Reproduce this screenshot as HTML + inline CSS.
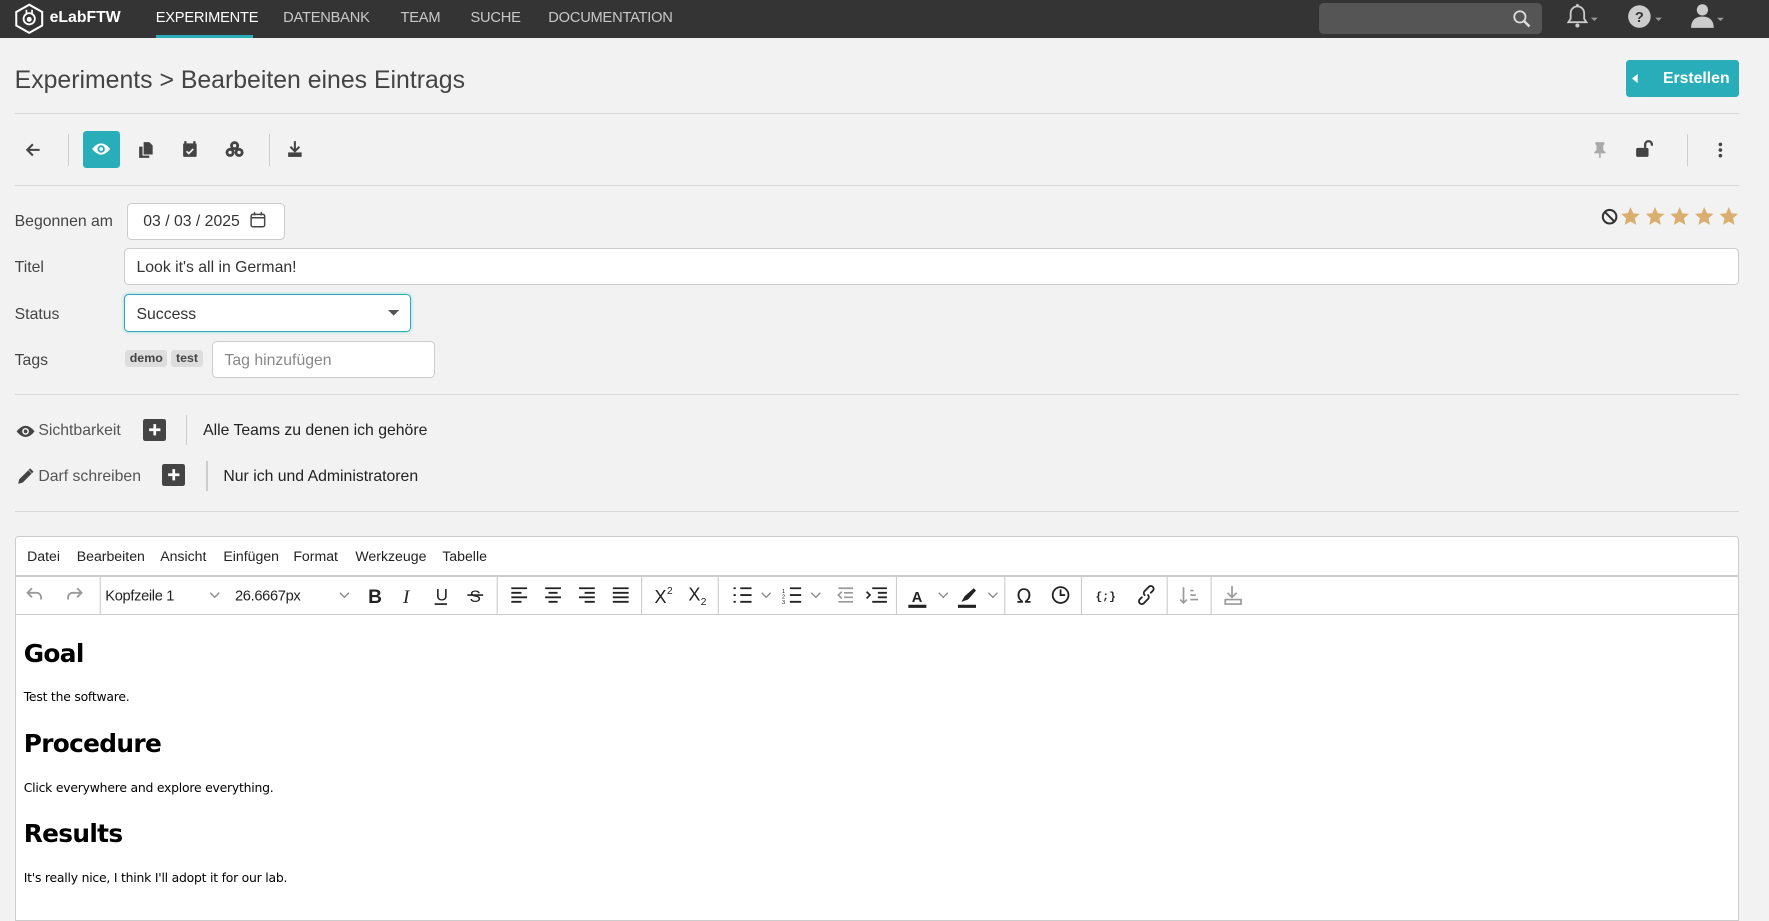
<!DOCTYPE html>
<html><head><meta charset="utf-8"><style>
html,body{margin:0;padding:0;width:1769px;height:897px;overflow:hidden;background:#f2f2f2;font-family:"Liberation Sans",sans-serif}
#w{position:absolute;left:0;top:0;width:1568px;height:795px;zoom:1.12819;color:#333}
.a{position:absolute}
.nav{left:0;top:0;width:1568px;height:34px;background:#343434}
.ni{top:9px;font-size:13px;color:#c8c8c8;letter-spacing:-0.2px}
.hr{height:1px;background:#d8d8d8;left:13px;width:1528px}
.lbl{font-size:14px;color:#444}
.inp{background:#fff;border:1px solid #ccc;border-radius:4px;box-sizing:border-box}
.tag{top:310px;height:15px;background:#ddd;border-radius:3px;font-size:11px;font-weight:bold;color:#444;line-height:15px;padding:0 4px}
.sep{width:1px;background:#ccc}
.mi{top:486px;font-size:12.5px;color:#222}
.h{font-size:22px;font-weight:bold;color:#000;left:21px;font-family:"DejaVu Sans","Liberation Sans",sans-serif;letter-spacing:-0.6px}
.p{font-size:11px;color:#000;left:21px;font-family:"DejaVu Sans","Liberation Sans",sans-serif;letter-spacing:-0.2px}
</style></head><body><div id="w">
<div class="a nav"></div>
<svg class="a" style="left:12px;top:3px" width="27" height="28" viewBox="0 0 27 28"><path d="M13.5 1.5L25 8v12l-11.5 6.5L2 20V8z" fill="none" stroke="#fff" stroke-width="1.8"/><circle cx="13.5" cy="14" r="5" fill="none" stroke="#fff" stroke-width="1.6"/><circle cx="13.5" cy="14.5" r="2.2" fill="#fff"/><path d="M11 6v4M16 6v4" stroke="#fff" stroke-width="1.5"/></svg>
<div class="a" style="left:44px;top:8px;font-size:14px;font-weight:bold;color:#fff">eLabFTW</div>
<div class="a ni" style="left:138px;color:#fff">EXPERIMENTE</div>
<div class="a" style="left:138px;top:31px;width:86px;height:3px;background:#29aeb9"></div>
<div class="a ni" style="left:251px">DATENBANK</div>
<div class="a ni" style="left:355px">TEAM</div>
<div class="a ni" style="left:417px">SUCHE</div>
<div class="a ni" style="left:486px">DOCUMENTATION</div>
<div class="a" style="left:1169px;top:3px;width:198px;height:27px;background:#555;border-radius:4px"></div>
<svg class="a" style="left:1340px;top:8px" width="18" height="18" viewBox="0 0 18 18"><circle cx="7" cy="7" r="5" fill="none" stroke="#ddd" stroke-width="1.6"/><path d="M10.5 10.5l5 5" stroke="#ddd" stroke-width="2.2"/></svg>
<svg class="a" style="left:1387px;top:3px" width="30" height="24" viewBox="0 0 30 24"><path d="M3 17h16l-2-3V9a6 6 0 0 0-12 0v5z" fill="none" stroke="#ccc" stroke-width="1.6"/><circle cx="11" cy="20" r="1.8" fill="#ccc"/><circle cx="11" cy="2" r="1.2" fill="#ccc"/><path d="M23 13h6l-3 3z" fill="#999"/></svg>
<svg class="a" style="left:1442px;top:3px" width="34" height="24" viewBox="0 0 34 24"><circle cx="11" cy="12" r="10" fill="#ccc"/><text x="11" y="17" font-size="13" font-weight="bold" text-anchor="middle" fill="#343434" font-family="Liberation Sans">?</text><path d="M25 13h6l-3 3z" fill="#999"/></svg>
<svg class="a" style="left:1498px;top:2px" width="34" height="24" viewBox="0 0 34 24"><circle cx="11" cy="7" r="5" fill="#ccc"/><path d="M1 23c0-7 4-10 10-10s10 3 10 10z" fill="#ccc"/><path d="M24 14h6l-3 3z" fill="#999"/></svg>

<div class="a" style="left:13px;top:59px;font-size:22px;color:#444">Experiments &gt; Bearbeiten eines Eintrags</div>
<div class="a" style="left:1441px;top:53px;width:100px;height:33px;background:#29aeb9;border-radius:3px"></div>
<svg class="a" style="left:1447px;top:66px" width="6" height="8"><path d="M5 0v8L0 4z" fill="#fff"/></svg>
<div class="a" style="left:1474px;top:62px;font-size:14px;font-weight:bold;color:#fff">Erstellen</div>
<div class="a hr" style="top:100px"></div>

<svg class="a" style="left:22px;top:126px" width="14" height="14" viewBox="0 0 14 14"><path d="M13 7H2M7 2L2 7l5 5" fill="none" stroke="#444" stroke-width="1.8"/></svg>
<div class="a sep" style="left:60px;top:119px;height:28px"></div>
<div class="a" style="left:74px;top:116px;width:32px;height:33px;background:#29aeb9;border-radius:3px"></div>
<svg class="a" style="left:81px;top:124px" width="18" height="16" viewBox="0 0 18 16"><path d="M1 8q8-10 16 0q-8 10-16 0z" fill="#fff"/><circle cx="9" cy="8" r="3.3" fill="#29aeb9"/><circle cx="9" cy="8" r="1.6" fill="#fff"/></svg>
<svg class="a" style="left:122px;top:125px" width="15" height="16" viewBox="0 0 15 16"><path d="M5 1h5l3 3v8H5z" fill="#444"/><path d="M1 5h3v8h6v2H1z" fill="#444"/></svg>
<svg class="a" style="left:161px;top:124px" width="14" height="16" viewBox="0 0 14 16"><rect x="1" y="3" width="12" height="12" rx="1" fill="#444"/><path d="M3 1v3M11 1v3" stroke="#444" stroke-width="2"/><path d="M4 10l2 2 4-4" fill="none" stroke="#f2f2f2" stroke-width="1.5"/></svg>
<svg class="a" style="left:199px;top:124px" width="17" height="16" viewBox="0 0 17 16"><circle cx="8.5" cy="5" r="4" fill="#444"/><circle cx="4.5" cy="11" r="4" fill="#444"/><circle cx="12.5" cy="11" r="4" fill="#444"/><circle cx="8.5" cy="5" r="1.5" fill="#f2f2f2"/><circle cx="4.5" cy="11" r="1.5" fill="#f2f2f2"/><circle cx="12.5" cy="11" r="1.5" fill="#f2f2f2"/></svg>
<div class="a sep" style="left:238px;top:119px;height:28px"></div>
<svg class="a" style="left:254px;top:124px" width="14" height="16" viewBox="0 0 14 16"><path d="M7 1v9M3 6l4 4 4-4" fill="none" stroke="#444" stroke-width="1.8"/><rect x="1" y="11" width="12" height="4" fill="#444"/></svg>
<svg class="a" style="left:1411px;top:125px" width="14" height="16" viewBox="0 0 14 16"><path d="M3 1h8v2l-1 1v4l2 2v1H2v-1l2-2V4L3 3z" fill="#aaa"/><path d="M7 11v4" stroke="#aaa" stroke-width="1.5"/></svg>
<svg class="a" style="left:1449px;top:124px" width="18" height="16" viewBox="0 0 18 16"><rect x="1" y="7" width="11" height="8" rx="1.5" fill="#444"/><path d="M9 7V4a3 3 0 0 1 6 0v1" fill="none" stroke="#444" stroke-width="2"/></svg>
<div class="a sep" style="left:1495px;top:119px;height:28px"></div>
<svg class="a" style="left:1522px;top:125px" width="6" height="16"><circle cx="3" cy="3" r="1.6" fill="#444"/><circle cx="3" cy="8" r="1.6" fill="#444"/><circle cx="3" cy="13" r="1.6" fill="#444"/></svg>
<div class="a hr" style="top:164px"></div>

<div class="a lbl" style="left:13px;top:189px">Begonnen am</div>
<div class="a inp" style="left:113px;top:180px;width:140px;height:33px"></div>
<div class="a" style="left:127px;top:189px;font-size:14px;color:#333">03 / 03 / 2025</div>
<svg class="a" style="left:222px;top:187px" width="14" height="15" viewBox="0 0 14 15"><rect x="1" y="3" width="12" height="11" rx="1.5" fill="none" stroke="#444" stroke-width="1.3"/><path d="M1 6h12M4 1v3M10 1v3" stroke="#444" stroke-width="1.3"/></svg>
<svg class="a" style="left:1418px;top:183px" width="124" height="18" viewBox="0 0 124 18"><circle cx="8.5" cy="9.5" r="6" fill="none" stroke="#333" stroke-width="1.8"/><path d="M4.5 5.5l8 8" stroke="#333" stroke-width="1.8"/><g fill="#d9ae6e"><path id="s" d="M27 1l2.4 5.4 5.8.6-4.4 3.9 1.3 5.8L27 13.7l-5.1 3 1.3-5.8L18.8 7l5.8-.6z"/><use href="#s" x="21.8"/><use href="#s" x="43.6"/><use href="#s" x="65.4"/><use href="#s" x="87.2"/></g></svg>

<div class="a lbl" style="left:13px;top:230px">Titel</div>
<div class="a inp" style="left:110px;top:220px;width:1431px;height:33px"></div>
<div class="a" style="left:121px;top:230px;font-size:14px;color:#333">Look it's all in German!</div>

<div class="a lbl" style="left:13px;top:271px">Status</div>
<div class="a inp" style="left:110px;top:261px;width:254px;height:33px;border-color:#29aeb9;box-shadow:0 0 3px #8cd3d9"></div>
<div class="a" style="left:121px;top:271px;font-size:14px;color:#333">Success</div>
<svg class="a" style="left:344px;top:275px" width="10" height="6"><path d="M0 0h10L5 5z" fill="#555"/></svg>

<div class="a lbl" style="left:13px;top:312px">Tags</div>
<div class="a tag" style="left:111px">demo</div>
<div class="a tag" style="left:152px">test</div>
<div class="a inp" style="left:188px;top:302px;width:198px;height:33px"></div>
<div class="a" style="left:199px;top:312px;font-size:14px;color:#888">Tag hinzufügen</div>
<div class="a hr" style="top:349px"></div>

<svg class="a" style="left:14px;top:376px" width="17" height="13" viewBox="0 0 17 13"><path d="M0.5 6.5q8-10 16 0q-8 10-16 0z" fill="#444"/><circle cx="8.5" cy="6.5" r="3" fill="#f2f2f2"/><circle cx="8.5" cy="6.5" r="1.6" fill="#444"/></svg>
<div class="a lbl" style="left:34px;top:374px;color:#555">Sichtbarkeit</div>
<div class="a" style="left:127px;top:371px;width:20px;height:20px;background:#444;border-radius:2px"></div>
<svg class="a" style="left:131px;top:375px" width="12" height="12"><path d="M6 1v10M1 6h10" stroke="#fff" stroke-width="2.4"/></svg>
<div class="a sep" style="left:165px;top:368px;height:26px"></div>
<div class="a" style="left:180px;top:374px;font-size:14px;color:#222">Alle Teams zu denen ich gehöre</div>

<svg class="a" style="left:15px;top:415px" width="15" height="15" viewBox="0 0 15 15"><path d="M1 14l1-4 8-8 3 3-8 8z" fill="#444"/><path d="M11 1l3 3" stroke="#444" stroke-width="2"/></svg>
<div class="a lbl" style="left:34px;top:415px;color:#555">Darf schreiben</div>
<div class="a" style="left:144px;top:411px;width:20px;height:20px;background:#444;border-radius:2px"></div>
<svg class="a" style="left:148px;top:415px" width="12" height="12"><path d="M6 1v10M1 6h10" stroke="#fff" stroke-width="2.4"/></svg>
<div class="a sep" style="left:183px;top:409px;height:26px"></div>
<div class="a" style="left:198px;top:415px;font-size:14px;color:#222">Nur ich und Administratoren</div>
<div class="a hr" style="top:453px"></div>

<div class="a" style="left:13px;top:475px;width:1527px;height:340px;background:#fff;border:1px solid #ccc;border-radius:3px 3px 0 0"></div>
<div class="a" style="left:14px;top:510px;width:1527px;height:1px;background:#ccc"></div>
<div class="a" style="left:14px;top:544px;width:1527px;height:1px;background:#ccc"></div>
<div class="a mi" style="left:24px">Datei</div>
<div class="a mi" style="left:68px">Bearbeiten</div>
<div class="a mi" style="left:142px">Ansicht</div>
<div class="a mi" style="left:198px">Einfügen</div>
<div class="a mi" style="left:260px">Format</div>
<div class="a mi" style="left:315px">Werkzeuge</div>
<div class="a mi" style="left:392px">Tabelle</div>

<svg class="a" style="left:14px;top:511px" width="1200" height="33" viewBox="0 0 1200 33">
<g fill="none" stroke-width="1.6">
<path d="M14 10l-4 4 4 4M10 14h8a4 4 0 0 1 4 4v2" stroke="#999"/>
<path d="M54 10l4 4-4 4M58 14h-8a4 4 0 0 0-4 4v2" stroke="#999"/>
</g>
<g stroke="#ccc"><path d="M74.5 0v33M426.5 0v33M554.5 0v33M622.5 0v33M780.5 0v33M876.5 0v33M944.5 0v33M1020.5 0v33M1059.5 0v33"/></g>
<text x="79" y="21" font-size="13" fill="#222" font-family="Liberation Sans" letter-spacing="-0.3">Kopfzeile 1</text>
<path d="M172 14l4 4 4-4M287 14l4 4 4-4M661 14l4 4 4-4M705 14l4 4 4-4M818 14l4 4 4-4M862 14l4 4 4-4" fill="none" stroke="#888" stroke-width="1.2"/>
<text x="194" y="21" font-size="13" fill="#222" font-family="Liberation Sans" letter-spacing="-0.3">26.6667px</text>
<text x="312" y="23" font-size="17" font-weight="bold" fill="#222" font-family="Liberation Sans">B</text>
<text x="343" y="23" font-size="17" font-style="italic" fill="#222" font-family="Liberation Serif">I</text>
<text x="372" y="21" font-size="15" fill="#222" font-family="Liberation Sans">U</text><path d="M371 24h11" stroke="#222" stroke-width="1.5"/>
<text x="402" y="22" font-size="15" fill="#222" font-family="Liberation Sans">S</text><path d="M400 16h14" stroke="#222" stroke-width="1.5"/>
<g stroke="#222" stroke-width="1.6">
<path d="M439 10h14M439 14h9M439 18h14M439 22h9"/>
<path d="M469 10h14M472 14h8M469 18h14M472 22h8"/>
<path d="M499 10h14M504 14h9M499 18h14M504 22h9"/>
<path d="M529 10h14M529 14h14M529 18h14M529 22h14"/>
<path d="M636 10h2M636 16h2M636 22h2M642 10h10M642 16h10M642 22h10"/>
<path d="M686 10h10M686 16h10M686 22h10"/>
<path d="M759 10h13M764 14h8M764 18h8M759 22h13"/>
<path d="M791 26h16" stroke-width="2.8"/>
<path d="M835 26h16" stroke-width="2.8"/>
</g>
<text x="566" y="23" font-size="16" fill="#222" font-family="Liberation Sans">X</text><text x="577" y="15" font-size="9" fill="#222" font-family="Liberation Sans">2</text>
<text x="596" y="21" font-size="16" fill="#222" font-family="Liberation Sans">X</text><text x="607" y="25" font-size="9" fill="#222" font-family="Liberation Sans">2</text>
<text x="679" y="14" font-size="5" fill="#222">1</text><text x="679" y="19" font-size="5" fill="#222">2</text><text x="679" y="24" font-size="5" fill="#222">3</text>
<path d="M729 10h13M734 14h8M734 18h8M729 22h13M732 13l-3 3 3 3" fill="none" stroke="#999" stroke-width="1.5"/>
<path d="M754 13l3 3-3 3" fill="none" stroke="#222" stroke-width="1.5"/>
<text x="794" y="22" font-size="13" fill="#222" font-family="Liberation Sans" font-weight="bold">A</text>
<path d="M838 22l3-5 8-7 2 2-7 8z" fill="#222"/>
<text x="887" y="23" font-size="17" fill="#222" font-family="DejaVu Sans">Ω</text>
<circle cx="926" cy="16" r="7" fill="none" stroke="#222" stroke-width="1.6"/><path d="M926 11v5h4" fill="none" stroke="#222" stroke-width="1.6"/>
<text x="957" y="20" font-size="10" font-weight="bold" fill="#222" font-family="Liberation Mono">{;}</text>
<g fill="none" stroke="#222" stroke-width="1.6" stroke-linecap="round"><path d="M998 18l-2 2a2.5 2.5 0 0 0 3.5 3.5l4-4a2.5 2.5 0 0 0 0-3.5"/><path d="M1006 14l2-2a2.5 2.5 0 0 0-3.5-3.5l-4 4a2.5 2.5 0 0 0 0 3.5"/></g>
<path d="M1035 9v14M1032 20l3 3 3-3M1041 12h3M1041 16h5M1041 20h7" fill="none" stroke="#999" stroke-width="1.5"/>
<path d="M1078 8v10M1074 14l4 4 4-4M1072 20h14v4h-14z" fill="none" stroke="#999" stroke-width="1.5"/>
</svg>

<div class="a h" style="top:566px">Goal</div>
<div class="a p" style="top:611px">Test the software.</div>
<div class="a h" style="top:646px">Procedure</div>
<div class="a p" style="top:691px">Click everywhere and explore everything.</div>
<div class="a h" style="top:726px">Results</div>
<div class="a p" style="top:771px">It's really nice, I think I'll adopt it for our lab.</div>
</div></body></html>
